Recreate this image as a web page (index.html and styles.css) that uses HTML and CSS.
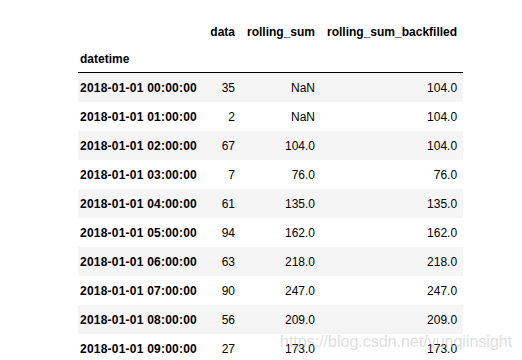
FILE: index.html
```
<!DOCTYPE html>
<html lang="en">
<head>
    <meta charset="UTF-8">
    <title>rolling_sum</title>
    <link rel="stylesheet" href="styles.css">
</head>
<body>
    <div class="output">
        <table class="dataframe">
            <thead>
                <tr class="head-cols">
                    <th class="idx"></th>
                    <th class="c-data">data</th>
                    <th class="c-sum">rolling_sum</th>
                    <th class="c-back">rolling_sum_backfilled</th>
                </tr>
                <tr class="head-index">
                    <th class="idx">datetime</th>
                    <th></th>
                    <th></th>
                    <th></th>
                </tr>
            </thead>
            <tbody>
                <tr><th class="idx">2018-01-01 00:00:00</th><td>35</td><td>NaN</td><td>104.0</td></tr>
                <tr><th class="idx">2018-01-01 01:00:00</th><td>2</td><td>NaN</td><td>104.0</td></tr>
                <tr><th class="idx">2018-01-01 02:00:00</th><td>67</td><td>104.0</td><td>104.0</td></tr>
                <tr><th class="idx">2018-01-01 03:00:00</th><td>7</td><td>76.0</td><td>76.0</td></tr>
                <tr><th class="idx">2018-01-01 04:00:00</th><td>61</td><td>135.0</td><td>135.0</td></tr>
                <tr><th class="idx">2018-01-01 05:00:00</th><td>94</td><td>162.0</td><td>162.0</td></tr>
                <tr><th class="idx">2018-01-01 06:00:00</th><td>63</td><td>218.0</td><td>218.0</td></tr>
                <tr><th class="idx">2018-01-01 07:00:00</th><td>90</td><td>247.0</td><td>247.0</td></tr>
                <tr><th class="idx">2018-01-01 08:00:00</th><td>56</td><td>209.0</td><td>209.0</td></tr>
                <tr><th class="idx">2018-01-01 09:00:00</th><td>27</td><td>173.0</td><td>173.0</td></tr>
            </tbody>
        </table>
        <div class="watermark">https://blog.csdn.net/yunqiinsight</div>
    </div>
</body>
</html>
```

FILE: styles.css
```
body {
    margin: 0;
    background: #fff;
    font-family: "Liberation Sans", Arial, Helvetica, sans-serif;
    color: #000;
    overflow: hidden;
}

.output {
    position: relative;
    width: 522px;
    height: 360px;
    padding: 18px 0 0 78px;
    box-sizing: border-box;
}

.dataframe {
    border-collapse: separate;
    border-spacing: 0;
    font-size: 12px;
    table-layout: fixed;
}

.dataframe th,
.dataframe td {
    padding: 0 6px;
    text-align: right;
    vertical-align: middle;
    line-height: normal;
    white-space: nowrap;
}

.dataframe th {
    font-weight: bold;
}

.dataframe th.idx {
    width: 117px;
    padding-left: 2px;
    text-align: left;
}

.dataframe tbody th.idx {
    letter-spacing: 0.22px;
}

.c-data { width: 26px; }
.c-sum { width: 67px; }
.c-back { width: 128px; }

.head-cols {
    height: 28px;
}

.head-index {
    height: 27px;
}

.dataframe .head-index th {
    border-bottom: 1px solid #000;
}

.dataframe tbody tr {
    height: 29px;
}

.dataframe tbody tr:nth-child(odd) {
    background: #f5f5f5;
}

.watermark {
    position: absolute;
    left: 280px;
    top: 333px;
    font-size: 16px;
    color: rgba(170, 170, 170, 0.4);
    white-space: nowrap;
}
```
